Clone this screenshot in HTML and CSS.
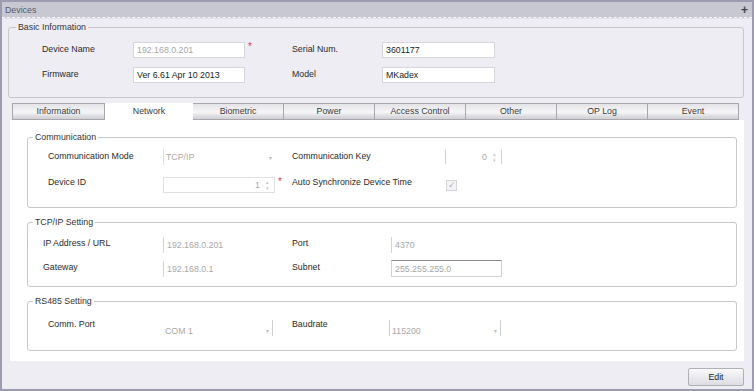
FILE: index.html
```html
<!DOCTYPE html>
<html>
<head>
<meta charset="utf-8">
<link rel="stylesheet" href="styles.css">
</head>
<body>
<div class="window">
  <div class="titlebar"><span class="title">Devices</span><span class="pin">+</span></div>
  <div class="body">
    <fieldset class="group basic">
      <legend>Basic Information</legend>
      <div class="grid basic-grid">
        <span class="lbl">Device Name</span>
        <div class="input dis">192.168.0.201</div>
        <span class="req">*</span>
        <span class="lbl">Serial Num.</span>
        <div class="input">3601177</div>
        <span class="lbl">Firmware</span>
        <div class="input">Ver 6.61 Apr 10 2013</div>
        <span></span>
        <span class="lbl">Model</span>
        <div class="input">MKadex</div>
      </div>
    </fieldset>

    <div class="tabs">
      <div class="tab w93">Information</div>
      <div class="tab active w88">Network</div>
      <div class="tab">Biometric</div>
      <div class="tab">Power</div>
      <div class="tab">Access Control</div>
      <div class="tab">Other</div>
      <div class="tab">OP Log</div>
      <div class="tab">Event</div>
    </div>

    <div class="panel">
      <fieldset class="group comm">
        <legend>Communication</legend>
        <div class="grid comm-grid">
          <span class="lbl">Communication Mode</span>
          <div class="combo off"><span class="val">TCP/IP</span><span class="arrow">&#9662;</span></div>
          <span></span>
          <span class="lbl">Communication Key</span>
          <div class="spin key"><span class="val">0</span><span class="spinarrows"><i>&#9652;</i><i>&#9662;</i></span></div>

          <span class="lbl up">Device ID</span>
          <div class="spin id"><span class="val">1</span><span class="spinarrows"><i>&#9652;</i><i>&#9662;</i></span></div>
          <span class="req">*</span>
          <span class="lbl up">Auto Synchronize Device Time</span>
          <div class="checkcell"><span class="check">&#10003;</span></div>
        </div>
      </fieldset>

      <fieldset class="group tcp">
        <legend>TCP/IP Setting</legend>
        <div class="grid tcp-grid">
          <span class="lbl">IP Address / URL</span>
          <div class="text off">192.168.0.201</div>
          <span></span>
          <span class="lbl">Port</span>
          <div class="text off">4370</div>

          <span class="lbl">Gateway</span>
          <div class="text off">192.168.0.1</div>
          <span></span>
          <span class="lbl">Subnet</span>
          <div class="text boxed">255.255.255.0</div>
        </div>
      </fieldset>

      <fieldset class="group rs">
        <legend>RS485 Setting</legend>
        <div class="grid rs-grid">
          <span class="lbl">Comm. Port</span>
          <div class="combo plain"><span class="val">COM 1</span><span class="arrow">&#9662;</span></div>
          <span></span>
          <span class="lbl">Baudrate</span>
          <div class="combo framed"><span class="val">115200</span><span class="arrow">&#9662;</span></div>
        </div>
      </fieldset>
    </div>

    <div class="footer"><button class="btn">Edit</button></div>
  </div>
</div>
</body>
</html>
```

FILE: styles.css
```css
* { box-sizing: border-box; }
html, body { margin: 0; padding: 0; background: #eeedf3; }
body {
  font-family: "Liberation Sans", Arial, sans-serif;
  font-size: 8.8px;
  color: #2a2a2a;
}
.window {
  width: 754px;
  height: 391px;
  border: 2px solid #9c9bb0;
  background: #eeedf3;
  display: flex;
  flex-direction: column;
}
.titlebar {
  height: 16px;
  background: #c7c8d2;
  border-bottom: 1px dashed #f7f7fa;
  display: flex;
  align-items: center;
  justify-content: space-between;
  padding: 0 4px 0 3px;
  color: #5a5a6e;
}
.pin { font-size: 12px; font-weight: bold; color: #444; line-height: 1; }
.body {
  flex: 1;
  padding: 0 8px 0 6px;
  display: flex;
  flex-direction: column;
  border-top: 1px solid #e2e1ea;
}
.group {
  margin: 0;
  border: 1px solid #c7c7cc;
  border-radius: 3px;
  min-width: 0;
}
.group legend {
  padding: 0 2px;
  line-height: 12px;
  color: #333;
}
.basic {
  margin-top: 2px;
  padding: 9px 0 11px 33px;
  height: 77px;
}
.basic legend { margin-left: -26px; }
.comm legend, .rs legend { margin-left: -15px; }
.tcp legend { margin-left: -10px; }
.grid { display: grid; align-items: center; }
.lbl { align-self: start; padding-top: 2px; white-space: nowrap; }
.lbl.up { padding-top: 0; }
.req { color: #d0405a; font-size: 10px; align-self: start; padding-left: 3px; line-height: 10px; }
.basic-grid {
  grid-template-columns: 91px 112px 47px 90px 113px;
  grid-template-rows: 16px 16px;
  row-gap: 9px;
}
.input {
  height: 16px;
  background: #fff;
  border: 1px solid #d6d6dc;
  padding: 0 3px;
  line-height: 14px;
  color: #222;
}
.input.dis { color: #a6a6a6; }

.tabs {
  display: flex;
  margin: 5px 0 0 4px;
  height: 17px;
}
.tab {
  width: 91px;
  height: 17px;
  border: 1px solid #a7a7ad;
  border-left: none;
  background: linear-gradient(#e4e4e8, #f6f6f8 55%, #dadade 85%, #cfcfd4);
  text-align: center;
  line-height: 15px;
  color: #3a3a3a;
}
.tab.w93 { width: 93px; border-left: 1px solid #a7a7ad; }
.tab.w88 { width: 88px; }
.tab.active {
  background: #fff;
  border: none;
  line-height: 16px;
}
.panel {
  background: #fff;
  margin: 0 0 0 2px;
  padding: 11px 7px 9px 17px;
  display: flex;
  flex-direction: column;
  gap: 8px;
  height: 241px;
}
.comm { padding: 6px 0 13px 20px; height: 77px; }
.tcp { padding: 8px 0 8px 15px; height: 71px; }
.rs { padding: 12px 0 12px 20px; height: 56px; }

.comm-grid {
  grid-template-columns: 115px 112px 17px 153px 57px;
  grid-template-rows: 16px 16px;
  row-gap: 12px;
}
.tcp-grid {
  grid-template-columns: 120px 112px 17px 99px 111px;
  grid-template-rows: 17px 17px;
  row-gap: 7px;
}
.rs-grid {
  grid-template-columns: 115px 110px 19px 97px 112px;
  grid-template-rows: 17px;
}
.rs-grid .lbl { padding-top: 0; }

.combo, .spin, .text {
  height: 16px;
  display: flex;
  align-items: center;
  color: #a8a8a8;
}
.combo .val { flex: 1; padding-left: 2px; }
.arrow { font-size: 6px; color: #bcbcbc; width: 10px; text-align: center; }
.combo.off { border-left: 1px solid #dcdcdc; }
.combo.plain { border-right: 1px solid #cfcfcf; padding-top: 6px; }
.combo.framed { border-left: 1px solid #cfcfcf; border-right: 1px solid #cfcfcf; padding-top: 6px; }
.spin { border: 1px solid #e0e0e4; }
.spin .val { flex: 1; text-align: right; padding-right: 6px; }
.spinarrows { display: flex; flex-direction: column; width: 8px; font-size: 5px; line-height: 6px; color: #c4c4c4; }
.spinarrows i { font-style: normal; }
.spin.key { border-top-color: #fff; border-bottom-color: #fff; border-left-color: #d4d4d4; border-right-color: #d4d4d4; }
.checkcell { display: flex; align-items: center; }
.check {
  width: 11px;
  height: 11px;
  border: 1px solid #d4d4d8;
  background: #f4f4f6;
  color: #b0b0b0;
  font-size: 9px;
  line-height: 9px;
  text-align: center;
  display: inline-block;
  margin-left: 1px;
}
.text { padding-left: 3px; }
.text.off { border-left: 1px solid #d4d4d4; }
.text.boxed { border: 1px solid #d2d2d6; border-top-color: #888; height: 17px; }

.footer {
  flex: 1;
  display: flex;
  justify-content: flex-end;
  align-items: flex-start;
  padding: 7px 0 0 0;
}
.btn {
  width: 56px;
  height: 18px;
  font-family: inherit;
  font-size: 8.8px;
  color: #222;
  border: 1px solid #b0b0b8;
  border-radius: 2px;
  background: linear-gradient(#fafafa, #ebebef 50%, #dcdce2);
  padding: 0;
}
```
